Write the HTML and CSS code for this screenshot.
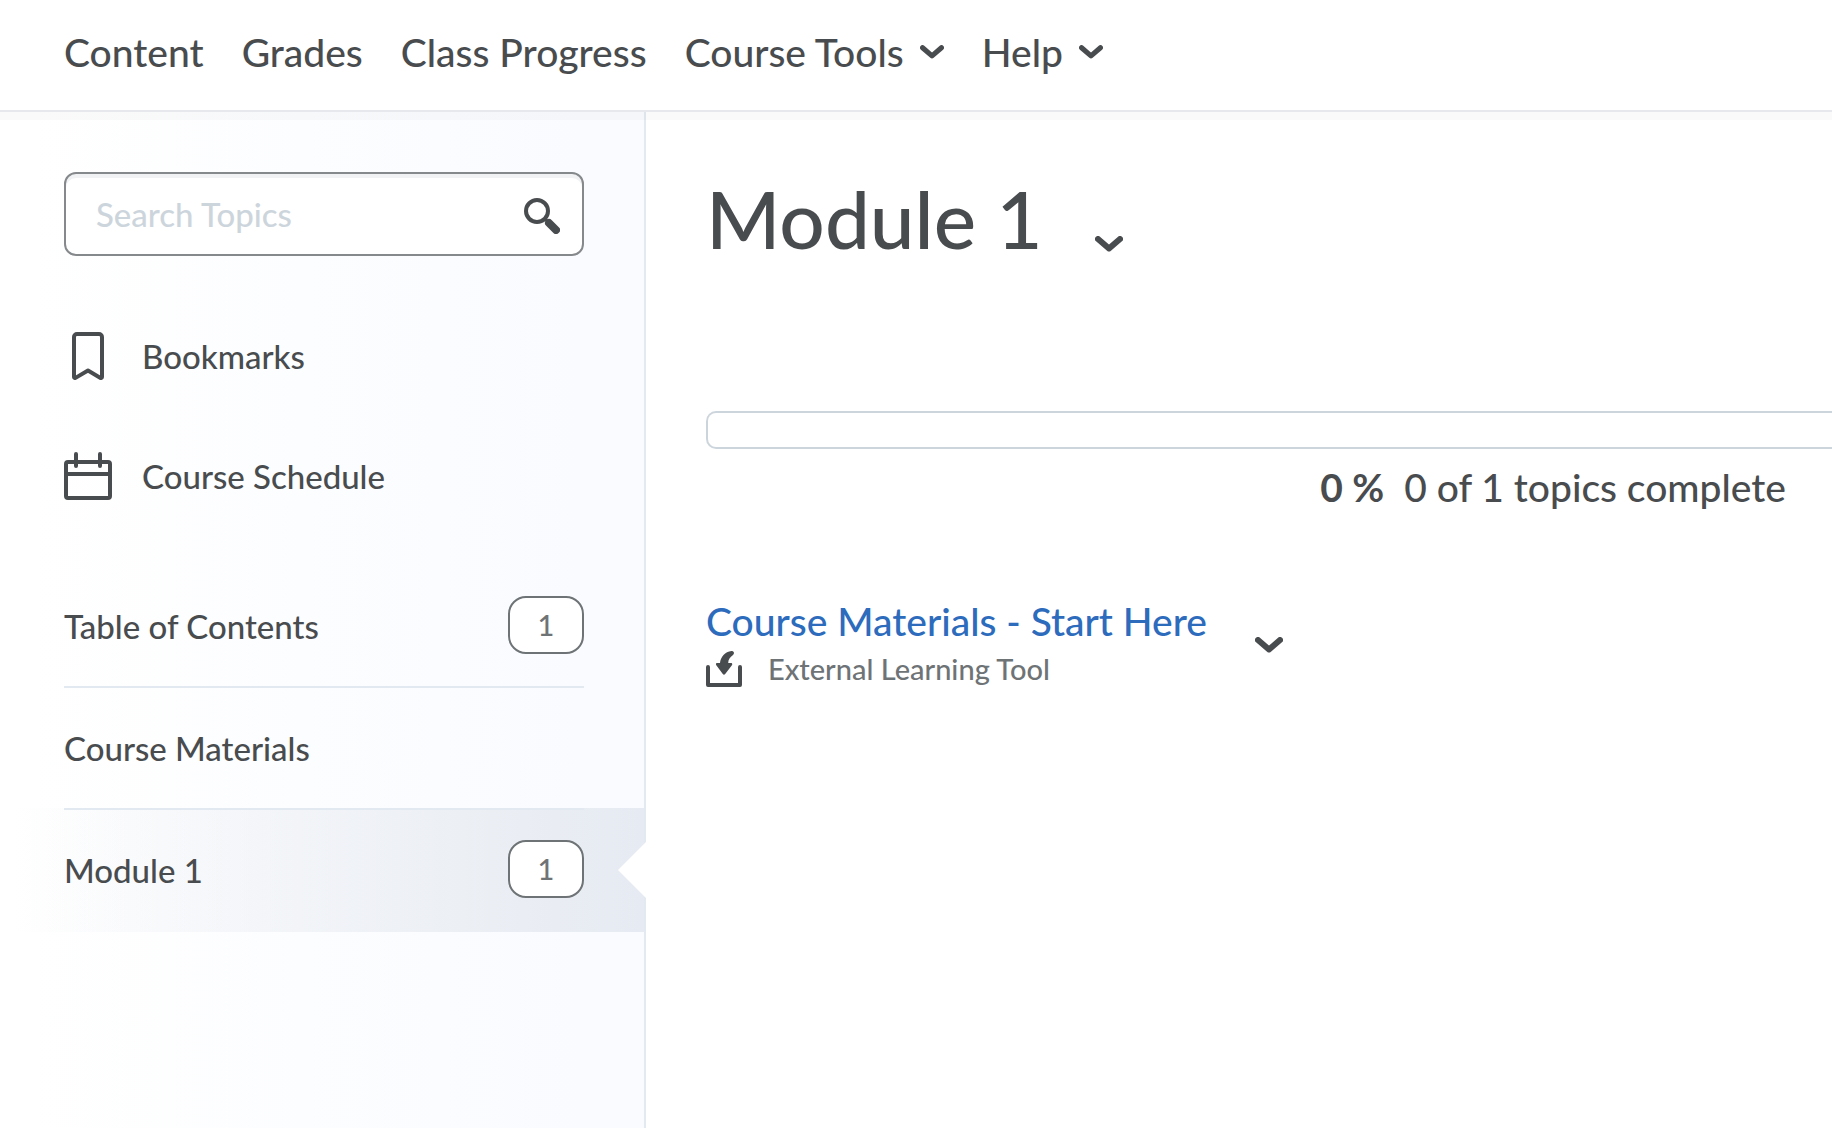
FILE: index.html
```html
<!DOCTYPE html>
<html lang="en">
<head>
    <meta charset="UTF-8">
    <meta name="viewport" content="width=device-width, initial-scale=1.0">
    <title>Module 1 - Table of Contents</title>
    <link rel="stylesheet" href="styles.css">
</head>
<body>
    <!-- Course navigation -->
    <header class="navbar">
        <nav class="nav-links">
            <a href="#">Content</a>
            <a href="#">Grades</a>
            <a href="#">Class Progress</a>
            <button type="button">Course Tools
                <svg class="chevron" width="24" height="14" viewBox="0 0 28 16"><path d="M3 3l11 9.500L25 3"/></svg>
            </button>
            <button type="button">Help
                <svg class="chevron" width="24" height="14" viewBox="0 0 28 16"><path d="M3 3l11 9.500L25 3"/></svg>
            </button>
        </nav>
    </header>

    <div class="page">
        <!-- Left panel -->
        <aside class="sidebar">
            <form class="search">
                <input type="text" placeholder="Search Topics" aria-label="Search Topics">
                <button type="button" aria-label="Search">
                    <svg width="36" height="36" viewBox="0 0 36 36">
                        <circle cx="13" cy="13" r="11" fill="none" stroke="currentColor" stroke-width="4"/>
                        <path d="M20 20l3 3" stroke="currentColor" stroke-width="3"/>
                        <path d="M25 25l7 7" stroke="currentColor" stroke-width="8" stroke-linecap="round"/>
                    </svg>
                </button>
            </form>

            <ul class="shortcuts">
                <li>
                    <a href="#">
                        <svg class="icon" width="48" height="48" viewBox="0 0 48 48"><path d="M13 2h22a3 3 0 0 1 3 3v40a1 1 0 0 1-1.500.900L24 38.500 11.500 45.900A1 1 0 0 1 10 45V5a3 3 0 0 1 3-3z"/></svg>
                        Bookmarks
                    </a>
                </li>
                <li>
                    <a href="#">
                        <svg class="icon" width="48" height="48" viewBox="0 0 48 48"><rect x="2" y="10" width="44" height="36" rx="2"/><path d="M2 22h44M12 2v12M36 2v12"/></svg>
                        Course Schedule
                    </a>
                </li>
            </ul>

            <ul class="modules">
                <li><a href="#"><span>Table of Contents</span><span class="count">1</span></a></li>
                <li><a href="#"><span>Course Materials</span></a></li>
                <li class="selected"><a href="#"><span>Module 1</span><span class="count">1</span></a></li>
            </ul>
        </aside>

        <!-- Module content -->
        <main class="content">
            <div class="title">
                <h1>Module 1</h1>
                <button type="button" aria-label="Module 1 actions">
                    <svg class="chevron" width="28" height="16" viewBox="0 0 28 16"><path d="M3 3l11 9.500L25 3"/></svg>
                </button>
            </div>

            <div class="progress" role="progressbar" aria-label="Topics complete" aria-valuenow="0" aria-valuemin="0" aria-valuemax="100"></div>
            <p class="progress-text"><strong>0 %</strong><span>0 of 1 topics complete</span></p>

            <div class="topic">
                <div>
                    <a href="#">Course Materials - Start Here</a>
                    <p class="topic-type">
                        <svg width="36" height="36" viewBox="0 0 36 36">
                            <path d="M2 16v18h32V16" fill="none" stroke="currentColor" stroke-width="4" stroke-linecap="round" stroke-linejoin="round"/>
                            <path d="M25.500 0c2.500-.200 3.300 2.600 1.500 4-3 2.200-4.700 4.500-4.800 8H25c1.200 0 1.600 1.300.900 2.200L19.200 23c-.700.900-1.700.900-2.400 0l-6.500-8.800c-.700-.900-.300-2.200.900-2.200H14C14.600 6 19 .500 25.500 0z" fill="currentColor"/>
                        </svg>
                        External Learning Tool
                    </p>
                </div>
                <button type="button" aria-label="Topic actions">
                    <svg class="chevron" width="28" height="16" viewBox="0 0 28 16"><path d="M3 3l11 9.500L25 3"/></svg>
                </button>
            </div>
        </main>
    </div>
</body>
</html>
```
FILE: styles.css
```css
* {
    box-sizing: border-box;
}

body {
    margin: 0;
    min-height: 100vh;
    display: flex;
    flex-direction: column;
    overflow-x: hidden;
    background-color: #fff;
    color: #494c4e;
    font-family: Lato, sans-serif;
    font-size: 33px;
    font-weight: 500;
    line-height: 40px;
}

h1, p, ul {
    margin: 0;
    padding: 0;
}

ul {
    list-style: none;
}

a {
    color: inherit;
    text-decoration: none;
}

button {
    padding: 0;
    border: none;
    background: none;
    color: inherit;
    font: inherit;
    cursor: pointer;
}

svg {
    display: block;
    flex-shrink: 0;
}

.chevron {
    fill: none;
    stroke: currentColor;
    stroke-width: 6;
    stroke-linecap: round;
    stroke-linejoin: round;
}

/* Top bar */
.navbar {
    position: relative;
    border-bottom: 2px solid #e6e8ee;
    box-shadow: 0 8px 0 rgba(0, 0, 0, 0.02);
    z-index: 1;
}

.nav-links {
    display: flex;
    gap: 38px;
    padding: 28px 64px 34px;
    font-size: 39px;
    line-height: 48px;
}

.nav-links button {
    display: flex;
    align-items: center;
    gap: 16px;
}

.page {
    flex: 1;
    display: flex;
}

/* Left panel */
.sidebar {
    flex: 0 0 646px;
    padding-top: 60px;
    border-right: 2px solid #e3e9f1;
    background: linear-gradient(to right, #fff 5%, #f9fbff 90%);
}

.search {
    display: flex;
    align-items: center;
    height: 84px;
    margin: 0 60px 40px 64px;
    padding: 4px 22px 0 30px;
    border: 2px solid #86898c;
    border-radius: 12px;
    background-color: #fff;
    box-shadow: inset 0 4px 0 #f1f2f4;
}

.search input {
    flex: 1;
    min-width: 0;
    padding: 0 0 4px;
    border: none;
    outline: none;
    background: none;
    color: inherit;
    font: inherit;
}

.search input::placeholder {
    color: #cdd5dc;
    opacity: 1;
}

.shortcuts {
    margin-bottom: 30px;
    padding: 0 60px 0 64px;
}

.shortcuts a {
    display: flex;
    align-items: center;
    gap: 30px;
    height: 120px;
}

.icon {
    fill: none;
    stroke: currentColor;
    stroke-width: 4;
    stroke-linecap: round;
    stroke-linejoin: round;
}

.modules li {
    position: relative;
    padding: 0 60px 0 64px;
}

.modules a {
    display: flex;
    align-items: center;
    justify-content: space-between;
    height: 122px;
    border-bottom: 2px solid #e3e9f1;
}

.modules .selected {
    margin-top: -2px;
    background: linear-gradient(to right, rgba(230, 234, 241, 0) 2%, #eceff4 72%, #e6eaf2);
}

.modules .selected a {
    height: 124px;
    padding-bottom: 2px;
    border-top: 2px solid #e3e9f1;
    border-bottom: none;
}

/* Notch that points from the selected module to the content */
.modules .selected::after {
    content: "";
    position: absolute;
    top: 34px;
    right: -2px;
    width: 28px;
    height: 56px;
    background-color: #fff;
    clip-path: polygon(100% 0, 0 50%, 100% 100%);
}

.count {
    width: 76px;
    height: 58px;
    margin-bottom: 2px;
    border: 2px solid #6e7376;
    border-radius: 18px;
    background-color: #fff;
    color: #6e7376;
    font-size: 29px;
    line-height: 54px;
    text-align: center;
}

/* Module content */
.content {
    flex: 1;
    min-width: 0;
    padding: 58px 0 0 60px;
}

.title {
    display: flex;
    align-items: flex-end;
    gap: 52px;
    margin-bottom: 145px;
}

h1 {
    font-size: 80px;
    font-weight: 500;
    line-height: 96px;
}

.title .chevron {
    margin-bottom: 14px;
}

.progress {
    height: 38px;
    border: 2px solid #cdd5dc;
    border-right: none;
    border-radius: 10px 0 0 10px;
}

.progress-text {
    display: flex;
    justify-content: flex-end;
    gap: 20px;
    padding: 14px 46px 86px 0;
    font-size: 39px;
    line-height: 48px;
}

.topic {
    display: flex;
    align-items: center;
    gap: 48px;
}

.topic a {
    color: #2d6bbd;
    font-size: 39px;
    line-height: 48px;
}

.topic-type {
    display: flex;
    align-items: center;
    gap: 26px;
    color: #6e7376;
    font-size: 29px;
    line-height: 48px;
}

.topic-type svg {
    color: #494c4e;
}
```
